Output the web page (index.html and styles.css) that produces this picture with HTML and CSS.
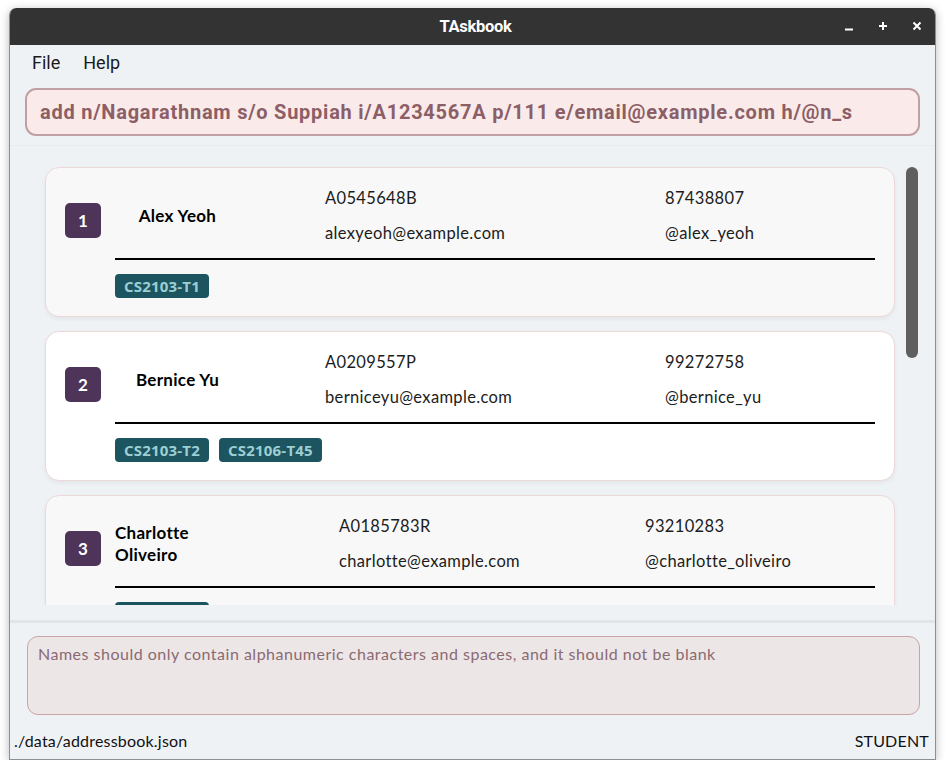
FILE: index.html
```html
<!DOCTYPE html>
<html>
<head>
<meta charset="utf-8">
<title>TAskbook</title>
<link rel="stylesheet" href="styles.css">
</head>
<body>
<div class="window">
  <div class="titlebar">
    <span class="title">TAskbook</span>
    <div class="winbtns">
      <svg class="wb wb-min" width="10" height="10" viewBox="0 0 10 10"><path d="M1 8.5H9" stroke="#fff" stroke-width="2"/></svg>
      <svg class="wb wb-max" width="10" height="10" viewBox="0 0 10 10"><path d="M5 1V9M1 5H9" stroke="#fff" stroke-width="2"/></svg>
      <svg class="wb wb-close" width="10" height="10" viewBox="0 0 10 10"><path d="M1.5 1.5L8.5 8.5M8.5 1.5L1.5 8.5" stroke="#fff" stroke-width="2"/></svg>
    </div>
  </div>
  <div class="menubar">
    <span class="menu-item">File</span>
    <span class="menu-item">Help</span>
  </div>
  <div class="command-wrap">
    <div class="command-box">add n/Nagarathnam s/o Suppiah i/A1234567A p/111 e/email@example.com h/@n_s</div>
  </div>
  <div class="list-panel">
    <div class="cards">
      <div class="card">
        <div class="card-top">
          <div class="badge">1</div>
          <div class="name-col"><span class="name">Alex Yeoh</span></div>
          <div class="col col-mid">
            <div class="field">A0545648B</div>
            <div class="field">alexyeoh@example.com</div>
          </div>
          <div class="col col-right">
            <div class="field">87438807</div>
            <div class="field">@alex_yeoh</div>
          </div>
        </div>
        <div class="rule"></div>
        <div class="tags"><span class="tag">CS2103-T1</span></div>
      </div>
      <div class="card card-alt">
        <div class="card-top">
          <div class="badge">2</div>
          <div class="name-col"><span class="name">Bernice Yu</span></div>
          <div class="col col-mid">
            <div class="field">A0209557P</div>
            <div class="field">berniceyu@example.com</div>
          </div>
          <div class="col col-right">
            <div class="field">99272758</div>
            <div class="field">@bernice_yu</div>
          </div>
        </div>
        <div class="rule"></div>
        <div class="tags"><span class="tag">CS2103-T2</span><span class="tag">CS2106-T45</span></div>
      </div>
      <div class="card card-wide">
        <div class="card-top">
          <div class="badge">3</div>
          <div class="name-col"><span class="name">Charlotte Oliveiro</span></div>
          <div class="col col-mid">
            <div class="field">A0185783R</div>
            <div class="field">charlotte@example.com</div>
          </div>
          <div class="col col-right">
            <div class="field">93210283</div>
            <div class="field">@charlotte_oliveiro</div>
          </div>
        </div>
        <div class="rule"></div>
        <div class="tags"><span class="tag">CS2103-T1</span></div>
      </div>
    </div>
    <div class="scrollbar"><div class="thumb"></div></div>
  </div>
  <div class="divider"></div>
  <div class="result-wrap">
    <div class="result-box">Names should only contain alphanumeric characters and spaces, and it should not be blank</div>
  </div>
  <div class="statusbar">
    <span>./data/addressbook.json</span>
    <span>STUDENT</span>
  </div>
</div>
</body>
</html>
```
FILE: styles.css
```css
html, body {
  margin: 0;
  padding: 0;
  background: #ffffff;
}
body {
  padding: 8px 0 0 9px;
  font-family: "Lato", "Liberation Sans", sans-serif;
}
.window {
  width: 925px;
  height: 751px;
  background: #eff2f5;
  border: 1px solid #8f8f8f;
  border-top: none;
  border-radius: 7px 7px 0 0;
  box-shadow: 0 2px 10px rgba(0,0,0,0.28);
  display: flex;
  flex-direction: column;
  overflow: hidden;
}
.titlebar {
  height: 37px;
  flex: none;
  background: #333333;
  display: flex;
  align-items: center;
  justify-content: center;
  position: relative;
  margin: 0 -1px;
  border-radius: 7px 7px 0 0;
}
.title {
  color: #ffffff;
  font-family: "Roboto", sans-serif;
  font-weight: 700;
  font-size: 16.5px;
  letter-spacing: -0.3px;
  margin-left: 6px;
}
.winbtns {
  position: absolute;
  right: 14px;
  top: 13px;
  display: flex;
  gap: 24px;
}
.wb { display: block; }
.menubar {
  height: 35px;
  flex: none;
  display: flex;
  align-items: center;
  padding-left: 22px;
  gap: 23px;
  font-family: "Roboto", sans-serif;
  font-size: 18px;
  color: #1a1a1a;
}
.command-wrap {
  flex: none;
  padding: 8px 15px 9px 15px;
}
.command-box {
  height: 44px;
  box-sizing: content-box;
  border: 2px solid #c0a0a2;
  border-radius: 11px;
  background: #fbeaea;
  display: flex;
  align-items: center;
  padding-left: 13px;
  font-family: "Roboto", sans-serif;
  font-weight: 700;
  font-size: 20px;
  letter-spacing: 0.75px;
  color: #8c5e66;
  white-space: nowrap;
  overflow: hidden;
}
.list-panel {
  height: 460px;
  flex: none;
  display: flex;
  padding: 21px 17px 0 35px;
  box-sizing: border-box;
  overflow: hidden;
  border-top: 1px solid #e8ecef;
}
.cards {
  width: 850px;
  display: flex;
  flex-direction: column;
  gap: 14px;
}
.card {
  flex: none;
  border: 1.5px solid #ecd8d8;
  border-radius: 14px;
  background: #f8f8f8;
  padding: 13px 19px 18px 19px;
  box-shadow: 0 2px 4px rgba(0,0,0,0.05);
}
.card-alt { background: #ffffff; }
.card-top {
  display: flex;
  align-items: center;
  height: 70px;
}
.badge {
  width: 36px;
  height: 35px;
  flex: none;
  border-radius: 5px;
  background: #4e3459;
  color: #ffffff;
  font-weight: 700;
  font-size: 17px;
  display: flex;
  align-items: center;
  justify-content: center;
  margin-top: 9px;
  margin-right: 14px;
}
.name-col {
  width: 125px;
  flex: none;
  display: flex;
  justify-content: center;
}
.name {
  font-weight: 700;
  font-size: 17px;
  letter-spacing: 0.3px;
  line-height: 22px;
  color: #000000;
}
.col { flex: none; }
.col-mid { margin-left: 85px; width: 340px; }
.col-right { flex: 1; }
.card-wide .col-mid { margin-left: 99px; width: 306px; }
.field {
  font-size: 16.5px;
  letter-spacing: 0.35px;
  line-height: 35px;
  color: #1c1c1c;
  white-space: nowrap;
}
.rule {
  height: 2px;
  background: #000000;
  margin: 7px 0 0 50px;
}
.tags {
  display: flex;
  gap: 10px;
  margin: 14px 0 0 50px;
}
.tag {
  height: 24px;
  padding: 0 9px;
  border-radius: 4px;
  background: #1c5560;
  color: #9ccfd3;
  font-family: "Open Sans", sans-serif;
  font-weight: 700;
  font-size: 15px;
  letter-spacing: 0.2px;
  display: flex;
  align-items: center;
}
.scrollbar {
  width: 12px;
  margin-left: 11px;
  flex: none;
}
.thumb {
  height: 191px;
  border-radius: 6px;
  background: #5f5f5f;
}
.divider {
  height: 3px;
  flex: none;
  margin-top: 15px;
  background: #e2e5e8;
}
.result-wrap {
  flex: none;
  padding: 13px 15px 0 17px;
}
.result-box {
  height: 79px;
  border: 1.5px solid #c8a4a6;
  border-radius: 11px;
  background: #ede6e6;
  padding: 7px 10px 0 10px;
  box-sizing: border-box;
  font-size: 16px;
  letter-spacing: 0.5px;
  color: #8a6a72;
}
.statusbar {
  flex: 1;
  display: flex;
  justify-content: space-between;
  align-items: flex-start;
  padding: 16px 6px 0 4px;
  font-size: 16px;
  letter-spacing: 0.2px;
  color: #111111;
}
```
